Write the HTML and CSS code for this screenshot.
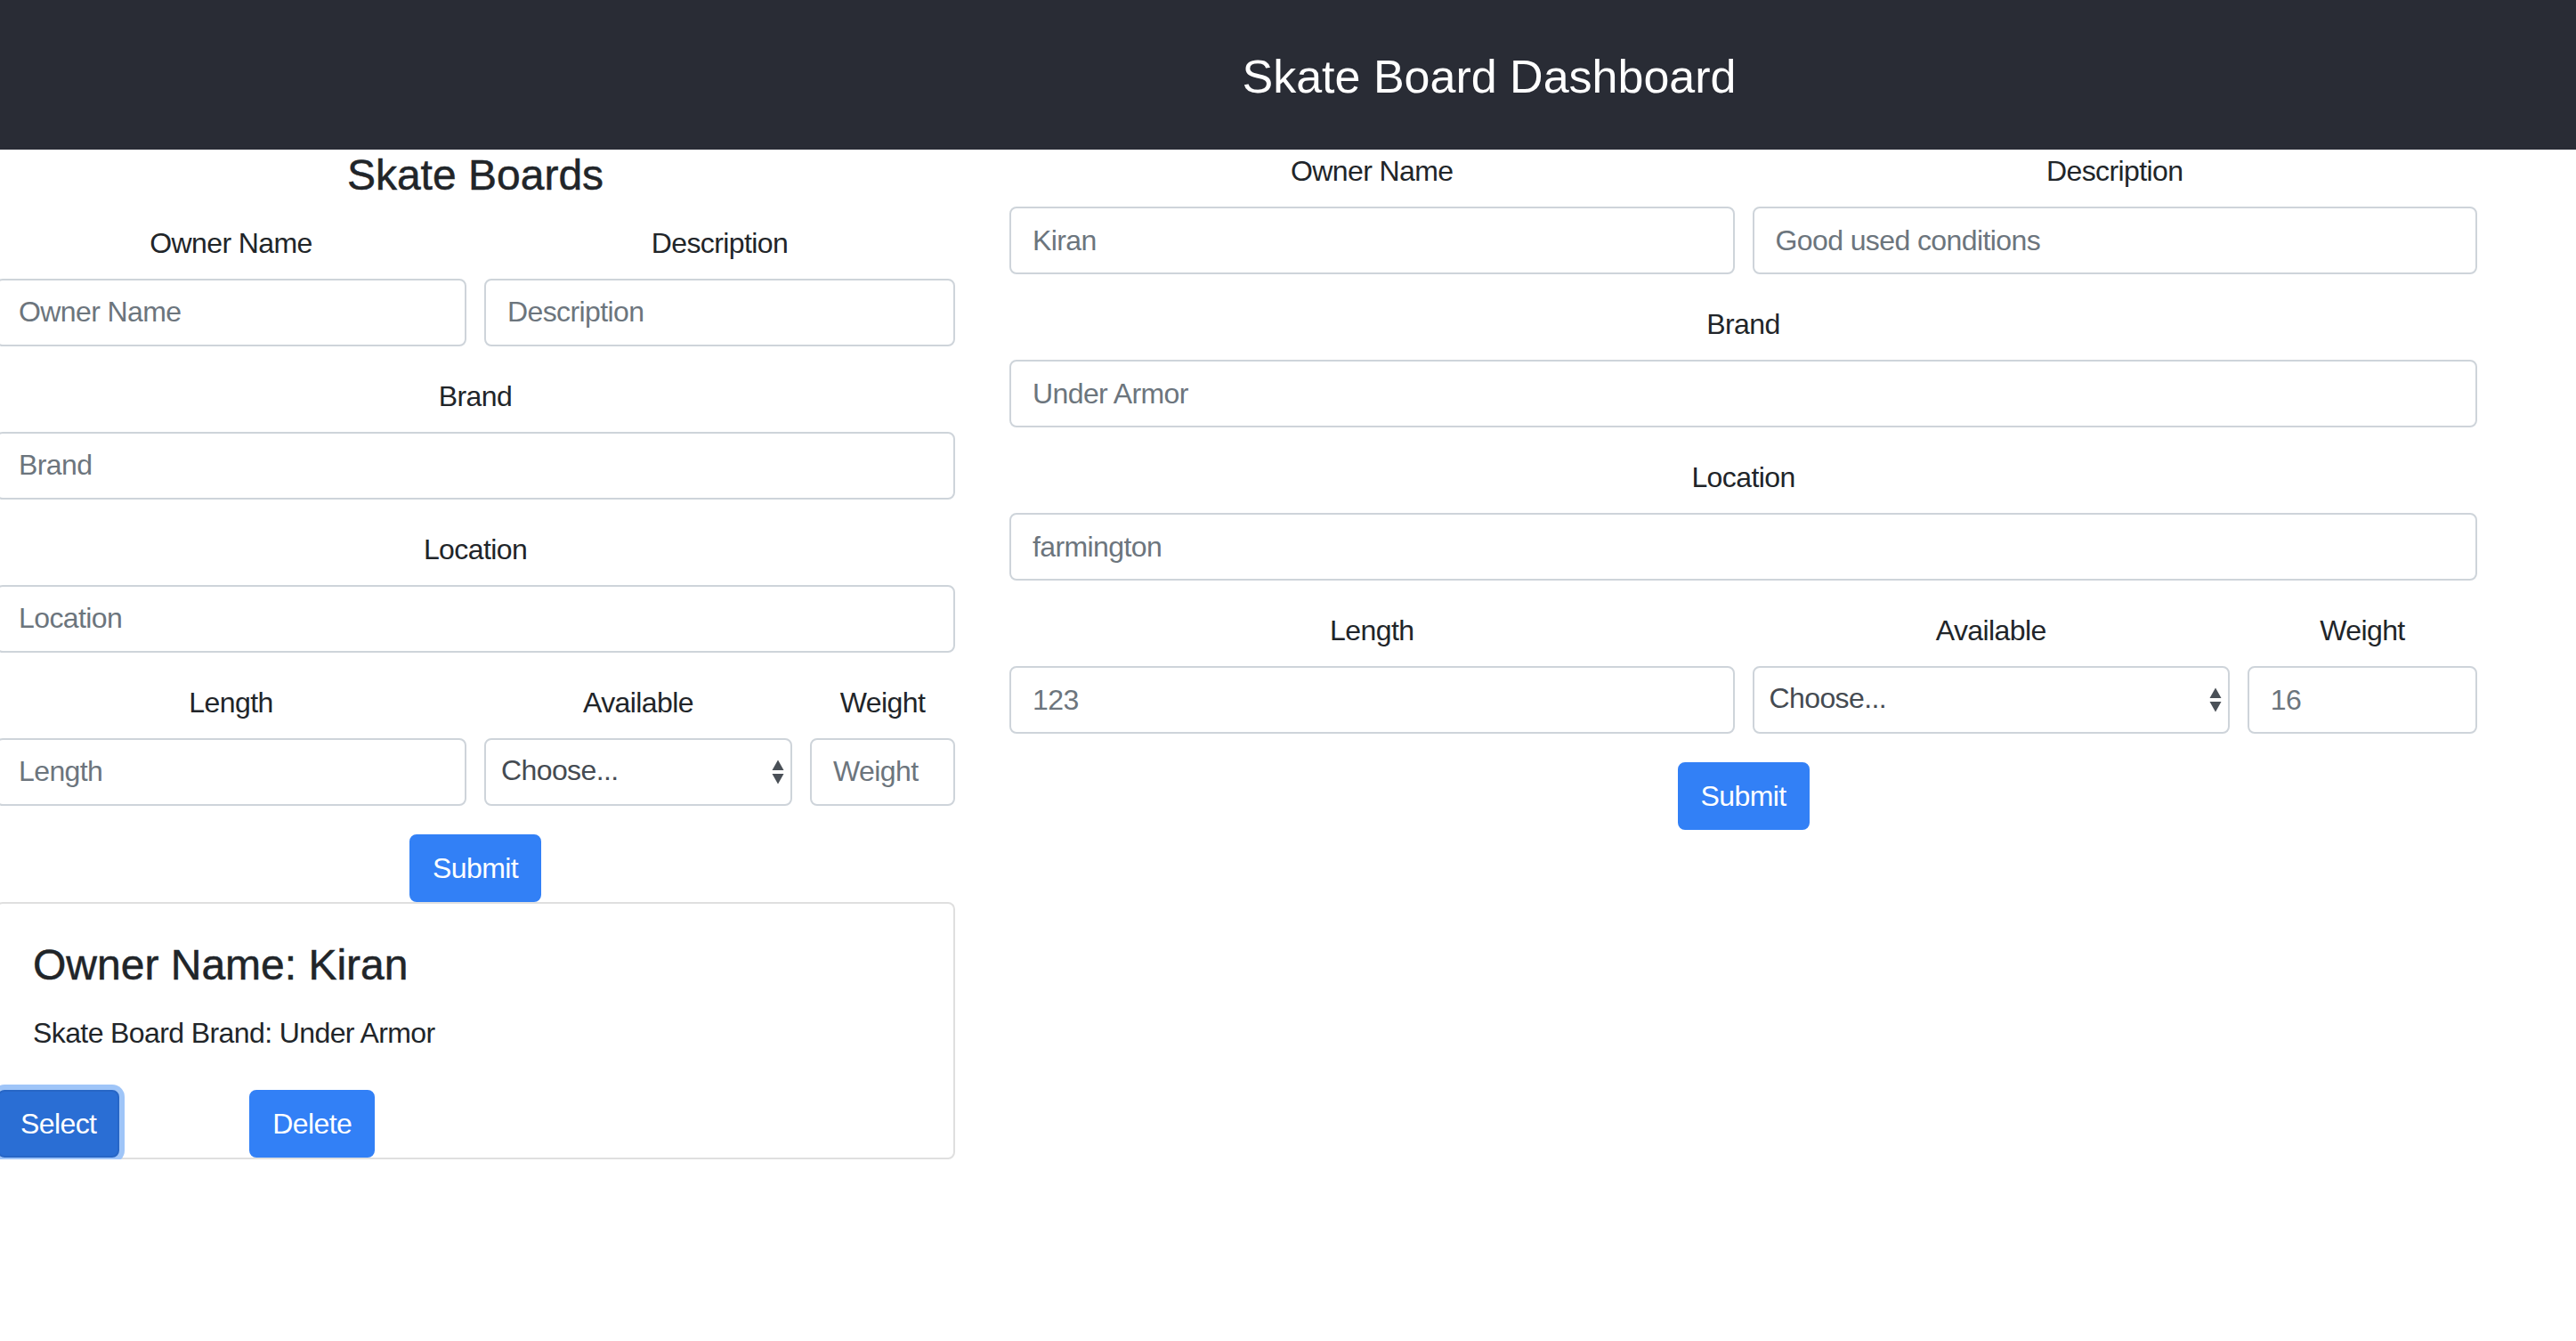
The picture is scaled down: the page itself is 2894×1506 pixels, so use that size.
FILE: index.html
```html
<!DOCTYPE html>
<html lang="en">
<head>
<meta charset="utf-8">
<title>Skate Board Dashboard</title>
<link rel="stylesheet" href="styles.css">
</head>
<body>
<header class="app-header">
  <h1 class="app-title">Skate Board Dashboard</h1>
</header>
<main class="layout">
  <section class="list-col">
    <h2 class="list-title">Skate Boards</h2>
    <form class="board-form">
      <div class="form-grid">
        <div class="field span-6"><label class="field-label">Owner Name</label><input class="field-input" type="text" placeholder="Owner Name"></div>
        <div class="field span-6"><label class="field-label">Description</label><input class="field-input" type="text" placeholder="Description"></div>
        <div class="field span-12"><label class="field-label">Brand</label><input class="field-input" type="text" placeholder="Brand"></div>
        <div class="field span-12"><label class="field-label">Location</label><input class="field-input" type="text" placeholder="Location"></div>
        <div class="field span-6"><label class="field-label">Length</label><input class="field-input" type="text" placeholder="Length"></div>
        <div class="field span-4"><label class="field-label">Available</label>
          <div class="select-wrap">
            <select class="field-select"><option>Choose...</option><option>Yes</option><option>No</option></select>
            <svg class="select-arrows" width="14" height="28" viewBox="0 0 14 28"><path d="M7 0.5 L13.5 12 L0.5 12 Z" fill="#4a5057"/><path d="M0.5 16 L13.5 16 L7 27.5 Z" fill="#4a5057"/></svg>
          </div>
        </div>
        <div class="field span-2"><label class="field-label">Weight</label><input class="field-input" type="text" placeholder="Weight"></div>
      </div>
      <div class="submit-row"><button type="button" class="btn">Submit</button></div>
    </form>
    <div class="card">
      <div class="card-body">
        <h4 class="card-title">Owner Name: Kiran</h4>
        <p class="card-text">Skate Board Brand: Under Armor</p>
      </div>
      <div class="card-actions">
        <button type="button" class="btn btn-focus">Select</button>
        <button type="button" class="btn btn-delete">Delete</button>
      </div>
    </div>
  </section>
  <section class="edit-col">
    <form class="board-form">
      <div class="form-grid">
        <div class="field span-6"><label class="field-label">Owner Name</label><input class="field-input" type="text" placeholder="Kiran"></div>
        <div class="field span-6"><label class="field-label">Description</label><input class="field-input" type="text" placeholder="Good used conditions"></div>
        <div class="field span-12"><label class="field-label">Brand</label><input class="field-input" type="text" placeholder="Under Armor"></div>
        <div class="field span-12"><label class="field-label">Location</label><input class="field-input" type="text" placeholder="farmington"></div>
        <div class="field span-6"><label class="field-label">Length</label><input class="field-input" type="text" placeholder="123"></div>
        <div class="field span-4"><label class="field-label">Available</label>
          <div class="select-wrap">
            <select class="field-select"><option>Choose...</option><option>Yes</option><option>No</option></select>
            <svg class="select-arrows" width="14" height="28" viewBox="0 0 14 28"><path d="M7 0.5 L13.5 12 L0.5 12 Z" fill="#4a5057"/><path d="M0.5 16 L13.5 16 L7 27.5 Z" fill="#4a5057"/></svg>
          </div>
        </div>
        <div class="field span-2"><label class="field-label">Weight</label><input class="field-input" type="text" placeholder="16"></div>
      </div>
      <div class="submit-row"><button type="button" class="btn">Submit</button></div>
    </form>
  </section>
</main>
</body>
</html>
```
FILE: styles.css
```css
* { box-sizing: border-box; }

html, body {
  margin: 0;
  padding: 0;
  background: #ffffff;
  overflow: hidden;
}

body {
  font-family: "Liberation Sans", Arial, sans-serif;
  font-size: 32px;
  line-height: 48px;
  color: #212529;
  letter-spacing: -0.6px;
}

.app-header {
  height: 168px;
  background: #292c35;
  display: flex;
  align-items: center;
  justify-content: center;
  padding-left: 452px;
  padding-top: 3px;
}

.app-title {
  margin: 0;
  font-size: 52px;
  line-height: 60px;
  font-weight: 400;
  color: #ffffff;
  letter-spacing: 0;
}

.layout {
  display: flex;
  align-items: flex-start;
}

.list-col {
  width: 1078px;
  margin-left: -5px;
  flex: none;
}

.edit-col {
  width: 1649px;
  margin-left: 61px;
  flex: none;
}

.list-title {
  margin: 0 0 23px;
  font-size: 48px;
  line-height: 57.6px;
  font-weight: 400;
  text-align: center;
  letter-spacing: 0;
  -webkit-text-stroke: 0.5px currentColor;
}

.form-grid {
  display: grid;
  grid-template-columns: repeat(12, 1fr);
  column-gap: 20px;
  row-gap: 32px;
  margin-bottom: 32px;
}

.span-12 { grid-column: span 12; }
.span-6 { grid-column: span 6; }
.span-4 { grid-column: span 4; }
.span-2 { grid-column: span 2; }

.field-label {
  display: block;
  text-align: center;
  margin-bottom: 16px;
  line-height: 48px;
}

.field-input,
.field-select {
  display: block;
  width: 100%;
  height: 76px;
  padding: 12px 24px;
  font-family: inherit;
  font-size: 32px;
  line-height: 48px;
  letter-spacing: -0.6px;
  color: #495057;
  background: #ffffff;
  border: 2px solid #ced4da;
  border-radius: 8px;
  outline: none;
}

.field-input::placeholder {
  color: #6c757d;
  opacity: 1;
}

.select-wrap {
  position: relative;
}

.field-select {
  -webkit-appearance: none;
  appearance: none;
  padding: 10px 40px 14px 17px;
  color: #454b52;
}

.select-arrows {
  position: absolute;
  right: 9px;
  top: 50%;
  transform: translateY(-50%);
  pointer-events: none;
}

.submit-row {
  display: flex;
  justify-content: center;
}

.btn {
  display: inline-block;
  height: 76px;
  padding: 12px 24px;
  font-family: inherit;
  font-size: 32px;
  line-height: 48px;
  letter-spacing: -0.6px;
  color: #ffffff;
  background: #3280f6;
  border: 2px solid #3280f6;
  border-radius: 8px;
  cursor: pointer;
}

.btn-focus {
  background: #2a6ed4;
  border-color: #2766c6;
  box-shadow: 0 0 0 6px #9fc5f8;
}

.btn-delete {
  margin-left: 146px;
}

.card {
  border: 2px solid #dfdfdf;
  border-radius: 8px;
  background: #ffffff;
}

.card-body {
  padding: 40px 40px 40px;
}

.card-title {
  margin: 0 0 24px;
  font-size: 48px;
  line-height: 57.6px;
  font-weight: 400;
  letter-spacing: 0;
  -webkit-text-stroke: 0.5px currentColor;
}

.card-text {
  margin: 0;
}

.card-actions {
  display: flex;
  align-items: flex-end;
}
```
